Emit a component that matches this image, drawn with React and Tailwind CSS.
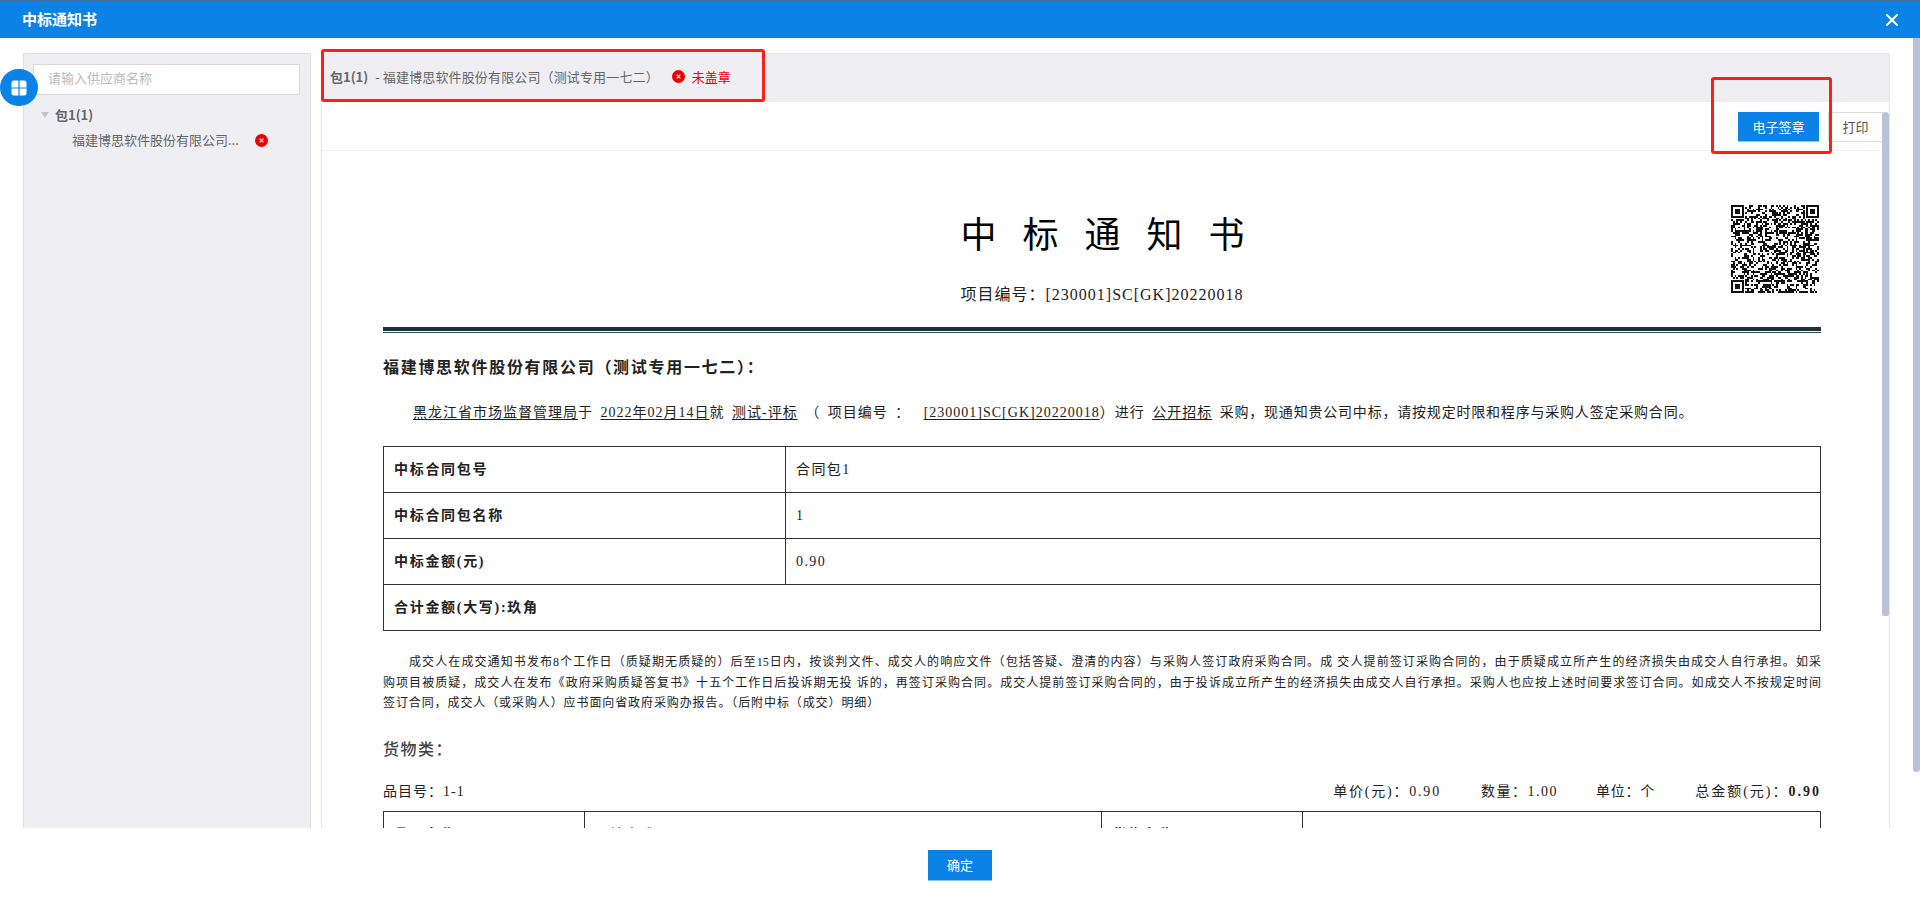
import React from "react";

const UI = '"Noto Sans CJK SC","Noto Sans",sans-serif';
const DOC = '"Liberation Serif","Noto Sans CJK SC",serif';

function qrCells() {
  const n = 49;
  const cells = [];
  let s = 12345;
  const rnd = () => {
    s = (s * 1103515245 + 12345) & 0x7fffffff;
    return (s >> 16) & 1;
  };
  const inFinder = (x, y, ox, oy) => x >= ox - 1 && x <= ox + 7 && y >= oy - 1 && y <= oy + 7;
  const finder = (x, y, ox, oy) => {
    const dx = x - ox;
    const dy = y - oy;
    if (dx < 0 || dy < 0 || dx > 6 || dy > 6) return false;
    if (dx === 0 || dy === 0 || dx === 6 || dy === 6) return true;
    return dx >= 2 && dx <= 4 && dy >= 2 && dy <= 4;
  };
  const origins = [[0, 0], [42, 0], [0, 42]];
  for (let y = 0; y < n; y++) {
    for (let x = 0; x < n; x++) {
      let on;
      const o = origins.find(([ox, oy]) => inFinder(x, y, ox, oy));
      if (o) on = finder(x, y, o[0], o[1]);
      else on = rnd() === 1;
      if (on) cells.push([x, y]);
    }
  }
  return cells;
}

function QR() {
  const cells = qrCells();
  return (
    <svg viewBox="0 0 49 49" className="w-[88px] h-[88px]" shapeRendering="crispEdges">
      {cells.map(([x, y]) => (
        <rect key={x + "-" + y} x={x} y={y} width="1" height="1" fill="#111" />
      ))}
    </svg>
  );
}

function RedX() {
  return (
    <svg viewBox="0 0 13 13" className="block w-[13px] h-[13px] shrink-0">
      <circle cx="6.5" cy="6.5" r="6.5" fill="#ee0000" />
      <path d="M4.6 4.6L8.4 8.4M8.4 4.6L4.6 8.4" stroke="#fff" strokeWidth="1.1" />
    </svg>
  );
}

function U({ children, className = "" }) {
  return <span className={"underline underline-offset-2 " + className}>{children}</span>;
}

function InfoRow({ label, value }) {
  return (
    <tr className="h-[46px]">
      <td className="border border-[#333] pl-[10px] pb-[1px] font-bold tracking-[1.7px] w-[402px]">{label}</td>
      <td className="border border-[#333] pl-[10px] pb-[1px] tracking-[1.4px]">{value}</td>
    </tr>
  );
}

export default function App() {
  return (
    <div className="relative w-[1920px] h-[902px] overflow-hidden bg-white flex flex-col" style={{ fontFamily: UI }}>
      <header className="h-[38px] shrink-0 bg-[#0b82e6] border-t border-[#3f6f9f] flex items-center justify-between pl-[22px] pr-[22px]">
        <span className="text-white text-[15px] font-bold">中标通知书</span>
        <svg viewBox="0 0 12 12" className="w-[12px] h-[12px]">
          <path d="M0.5 0.5L11.5 11.5M11.5 0.5L0.5 11.5" stroke="#fff" strokeWidth="2" />
        </svg>
      </header>

      <main className="relative h-[790px] shrink-0 flex gap-[10px] pl-[23px] pt-[15px] overflow-hidden">
        <aside className="w-[288px] shrink-0 bg-[#eeeef3] border border-[#dfdfe4] border-b-0 pt-[10px] px-[9px]">
          <input
            readOnly
            placeholder="请输入供应商名称"
            className="block w-[267px] h-[31px] bg-white border border-[#d9d9d9] pl-[14px] pb-[4px] text-[13px] outline-none placeholder:text-[#bbbbbb]"
          />
          <div className="mt-[9px] pl-[8px] h-[22px] flex items-center text-[13px] font-bold text-[#666]">
            <span className="w-0 h-0 border-x-[4px] border-x-transparent border-t-[6px] border-t-[#c4c4c8] mr-[6px]" />
            包1(1)
          </div>
          <div className="mt-[3px] pl-[39px] h-[22px] flex items-center text-[13px] text-[#666]">
            <span className="w-[183px] whitespace-nowrap">福建博思软件股份有限公司...</span>
            <RedX />
          </div>
        </aside>

        <section className="relative w-[1569px] shrink-0 border border-[#e6e6ea] border-b-0 overflow-hidden">
          <div className="h-[48px] bg-[#eeeef3] flex items-center pl-[8px] pb-[3px] text-[13px] text-[#666]">
            <span className="font-bold">包1(1)</span>
            <span className="ml-[7px] tracking-[0.14px]">- 福建博思软件股份有限公司（测试专用一七二）</span>
            <span className="ml-[13px]"><RedX /></span>
            <span className="ml-[7px] text-[#ee0000]">未盖章</span>
          </div>

          <div className="h-[49px] w-[1561px] border-b border-[#f2f2f2] flex justify-end gap-[9px] pt-[10px]">
            <button className="w-[81px] h-[30px] bg-[#0b82e6] text-white text-[13px] border-b border-[#8cc4f2]">电子签章</button>
            <button className="w-[55px] h-[30px] bg-white text-[#555] text-[13px] border border-[#dcdcdc]">打印</button>
          </div>

          <div className="relative w-[1438px] ml-[61px] pt-[60px] text-[14px] text-[#222]" style={{ fontFamily: DOC }}>
            <div className="absolute right-[2px] top-[54px]"><QR /></div>

            <h1 className="h-[50px] leading-[50px] text-center text-[36px] font-normal tracking-[26px] pl-[27px] text-black">中标通知书</h1>
            <p className="mt-[22px] leading-[24px] text-center text-[16px] tracking-[1px]">项目编号：[230001]SC[GK]20220018</p>

            <div className="mt-[20px] h-[4px] bg-[#1c3433]" />
            <div className="mt-[1px] h-[1px] bg-[#2b4a48]" />

            <p className="mt-[23px] leading-[24px] text-[16px] font-bold tracking-[1.7px]">福建博思软件股份有限公司（测试专用一七二）：</p>

            <p className="mt-[21px] pl-[30px] leading-[24px] tracking-[1px] whitespace-nowrap [word-spacing:3px]">
              <U>黑龙江省市场监督管理局</U>于 <U>2022年02月14日</U>就 <U>测试-评标</U> （ 项目编号 ： <U className="ml-[6px]">[230001]SC[GK]20220018</U>）进行 <U>公开招标</U> <span className="tracking-[0.8px]">采购，现通知贵公司中标，请按规定时限和程序与采购人签定采购合同。</span>
            </p>

            <table className="mt-[21px] w-full border-collapse border border-[#333]">
              <tbody>
                <InfoRow label="中标合同包号" value="合同包1" />
                <InfoRow label="中标合同包名称" value="1" />
                <InfoRow label="中标金额(元)" value="0.90" />
                <tr className="h-[46px]">
                  <td colSpan={2} className="border border-[#333] pl-[10px] pb-[1px] font-bold tracking-[1.7px]">合计金额(大写):玖角</td>
                </tr>
              </tbody>
            </table>

            <div className="mt-[21px] text-[12px] leading-[20.5px] text-[#222]">
              <p className="pl-[26px] text-justify [text-align-last:justify]">成交人在成交通知书发布8个工作日（质疑期无质疑的）后至15日内，按谈判文件、成交人的响应文件（包括答疑、澄清的内容）与采购人签订政府采购合同。成 交人提前签订采购合同的，由于质疑成立所产生的经济损失由成交人自行承担。如采</p>
              <p className="text-justify [text-align-last:justify]">购项目被质疑，成交人在发布《政府采购质疑答复书》十五个工作日后投诉期无投 诉的，再签订采购合同。成交人提前签订采购合同的，由于投诉成立所产生的经济损失由成交人自行承担。采购人也应按上述时间要求签订合同。如成交人不按规定时间</p>
              <p className="tracking-[0.9px]">签订合同，成交人（或采购人）应书面向省政府采购办报告。（后附中标（成交）明细）</p>
            </div>

            <p className="mt-[24.5px] leading-[24px] text-[16px] font-medium tracking-[1.5px] text-[#444]">货物类：</p>

            <div className="mt-[18px] h-[24px] leading-[24px] flex items-center justify-between whitespace-nowrap">
              <span className="tracking-[1px]">品目号：1-1</span>
              <div className="flex">
                <span className="tracking-[1.8px]">单价(元)：0.90</span>
                <span className="ml-[40px] tracking-[1.5px]">数量：1.00</span>
                <span className="ml-[38px] tracking-[0.8px]">单位：个</span>
                <span className="ml-[40px] tracking-[2px]">总金额(元)：<b>0.90</b></span>
              </div>
            </div>

            <table className="mt-[7px] w-full border-collapse border border-[#333] table-fixed">
              <tbody>
                <tr className="h-[46px]">
                  <td className="border border-[#333] pl-[10px] font-bold tracking-[1.7px] w-[201px]">品目名称</td>
                  <td className="border border-[#333] pl-[10px] tracking-[1px] w-[517px]">运输方式</td>
                  <td className="border border-[#333] pl-[10px] font-bold tracking-[1.7px] w-[201px]">货物名称</td>
                  <td className="border border-[#333] pl-[10px]"></td>
                </tr>
              </tbody>
            </table>
          </div>

          <div className="absolute top-[58px] right-0 w-[7px] h-[504px] bg-[#b8c4d6] rounded-t-[4px] rounded-b-[3px]" />
        </section>

        <div className="absolute right-0 top-0 w-[7px] h-[734px] bg-[#b8c4d6] rounded-b-[3px]" />
        <div className="absolute left-[321px] top-[11px] w-[444px] h-[53px] border-[3px] border-[#ff1e14] rounded-[3px]" />
        <div className="absolute left-[1711px] top-[39px] w-[121px] h-[77px] border-[3px] border-[#ff1e14] rounded-[3px]" />

        <div className="absolute left-0 top-[31px] w-[38px] h-[37px] rounded-full bg-[#0b82e6] flex items-center justify-center">
          <svg viewBox="0 0 16 16" className="w-[16px] h-[16px]">
            <path d="M0.5 3A2.5 2.5 0 0 1 3 0.5H7.4V7.4H0.5ZM8.6 0.5H13A2.5 2.5 0 0 1 15.5 3V7.4H8.6ZM0.5 8.6H7.4V15.5H3A2.5 2.5 0 0 1 0.5 13ZM8.6 8.6H15.5V13A2.5 2.5 0 0 1 13 15.5H8.6Z" fill="#fff" />
          </svg>
        </div>
      </main>

      <footer className="flex-1 flex justify-center pt-[22px]">
        <button className="w-[64px] h-[31px] bg-[#0b82e6] text-white text-[13px] border-b border-[#8cc4f2]">确定</button>
      </footer>
    </div>
  );
}
